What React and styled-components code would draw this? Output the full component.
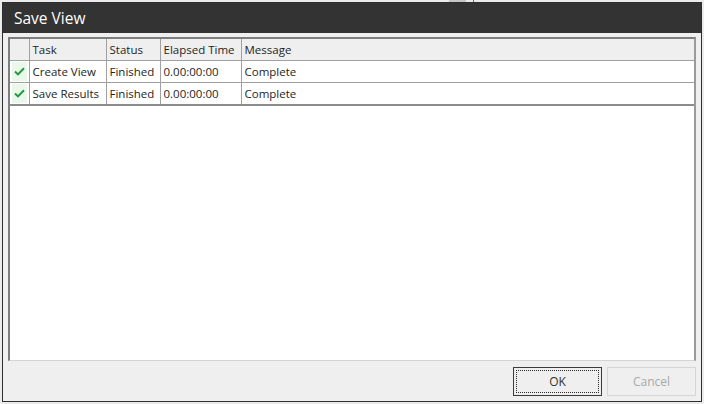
import React from "react";
import styled, { createGlobalStyle } from "styled-components";

const Global = createGlobalStyle`
  html, body { margin: 0; padding: 0; background: #ebebeb; }
  body { width: 704px; height: 404px; overflow: hidden; position: relative; font-family: "Open Sans", "Noto Sans", sans-serif; }
`;

const Backdrop = styled.div`
  position: relative;
  width: 704px;
  height: 404px;
  padding: 2px 0 0 2px;
  box-sizing: border-box;
`;

const BehindThumb = styled.div`
  position: absolute;
  left: 449px;
  top: 0;
  width: 17px;
  height: 2px;
  background: #c6c6c6;
`;

const BehindLine = styled.div`
  position: absolute;
  left: 473px;
  top: 0;
  width: 1px;
  height: 2px;
  background: #6a6a6a;
`;

const Dialog = styled.div`
  width: 700px;
  height: 400px;
  box-sizing: border-box;
  border: 1px solid #2e2e2e;
  background: #efefef;
  display: flex;
  flex-direction: column;
`;

const TitleBar = styled.div`
  height: 30px;
  flex: none;
  background: #333333;
  color: #ffffff;
  display: flex;
  align-items: center;
  padding-left: 11px;
  font-size: 15.5px;
`;

const Body = styled.div`
  flex: 1;
  display: flex;
  flex-direction: column;
  padding: 4px 5px 5px 5px;
  gap: 6px;
  min-height: 0;
`;

const Grid = styled.div`
  flex: 1;
  background: #ffffff;
  border-top: 2px solid #7e7e7e;
  border-left: 2px solid #7e7e7e;
  border-right: 2px solid #9a9a9a;
  border-bottom: 1px solid #d4d4d4;
  box-sizing: border-box;
`;

const Table = styled.table`
  border-collapse: collapse;
  width: 100%;
  font-size: 11.5px;
  color: #1e1e1e;
  table-layout: fixed;
`;

const HeadCell = styled.th`
  background: #efefef;
  font-weight: normal;
  text-align: left;
  height: 21px;
  padding: 0 0 0 3px;
  border-right: 1px solid #a0a0a0;
  border-bottom: 1px solid #a0a0a0;
  white-space: nowrap;
  overflow: hidden;
  &:last-child { border-right: none; }
`;

const Row = styled.tr`
  &:last-child td { border-bottom: 2px solid #8c8c8c; }
`;

const Cell = styled.td`
  height: 21px;
  padding: 0 0 0 3px;
  border-right: 1px solid #a0a0a0;
  border-bottom: 1px solid #a0a0a0;
  white-space: nowrap;
  overflow: hidden;
  &:last-child { border-right: none; }
`;

const StateCell = styled.td`
  height: 21px;
  padding: 1px 2px;
  border-right: 1px solid #a0a0a0;
  border-bottom: 1px solid #a0a0a0;
  box-sizing: border-box;
`;

const StateBox = styled.div`
  height: 19px;
  background: #e9f8ea;
  display: flex;
  align-items: center;
  justify-content: center;
`;

const Footer = styled.div`
  flex: none;
  display: flex;
  justify-content: flex-end;
  gap: 5px;
`;

const Button = styled.button`
  width: 89px;
  height: 29px;
  box-sizing: border-box;
  background: #efefef;
  font-family: inherit;
  font-size: 12px;
  padding: 2px;
  border: 1px solid ${(p) => (p.$focused ? "#3a3a3a" : "#d6d6d6")};
  color: ${(p) => (p.$disabled ? "#a8a8a8" : "#333333")};
  display: flex;
  align-items: stretch;
  justify-content: stretch;
`;

const ButtonFace = styled.span`
  flex: 1;
  display: flex;
  align-items: center;
  justify-content: center;
  border: 1px ${(p) => (p.$focused ? "dotted #2a2a2a" : "solid transparent")};
`;

const Check = () => (
  <svg width="11" height="9" viewBox="0 0 11 9">
    <path d="M1 4.6 L4 7.4 L10 1.2" fill="none" stroke="#1f9a3c" strokeWidth="2" />
  </svg>
);

const rows = [
  { task: "Create View", status: "Finished", time: "0.00:00:00", msg: "Complete" },
  { task: "Save Results", status: "Finished", time: "0.00:00:00", msg: "Complete" },
];

export default function App() {
  return (
    <>
      <Global />
      <Backdrop>
        <BehindThumb />
        <BehindLine />
        <Dialog>
          <TitleBar>Save View</TitleBar>
          <Body>
            <Grid>
              <Table>
                <colgroup>
                  <col style={{ width: 19 }} />
                  <col style={{ width: 77 }} />
                  <col style={{ width: 54 }} />
                  <col style={{ width: 81 }} />
                  <col />
                </colgroup>
                <thead>
                  <tr>
                    <HeadCell />
                    <HeadCell>Task</HeadCell>
                    <HeadCell>Status</HeadCell>
                    <HeadCell>Elapsed Time</HeadCell>
                    <HeadCell>Message</HeadCell>
                  </tr>
                </thead>
                <tbody>
                  {rows.map((r) => (
                    <Row key={r.task}>
                      <StateCell>
                        <StateBox>
                          <Check />
                        </StateBox>
                      </StateCell>
                      <Cell>{r.task}</Cell>
                      <Cell>{r.status}</Cell>
                      <Cell>{r.time}</Cell>
                      <Cell>{r.msg}</Cell>
                    </Row>
                  ))}
                </tbody>
              </Table>
            </Grid>
            <Footer>
              <Button $focused>
                <ButtonFace $focused>OK</ButtonFace>
              </Button>
              <Button $disabled>
                <ButtonFace>Cancel</ButtonFace>
              </Button>
            </Footer>
          </Body>
        </Dialog>
      </Backdrop>
    </>
  );
}
